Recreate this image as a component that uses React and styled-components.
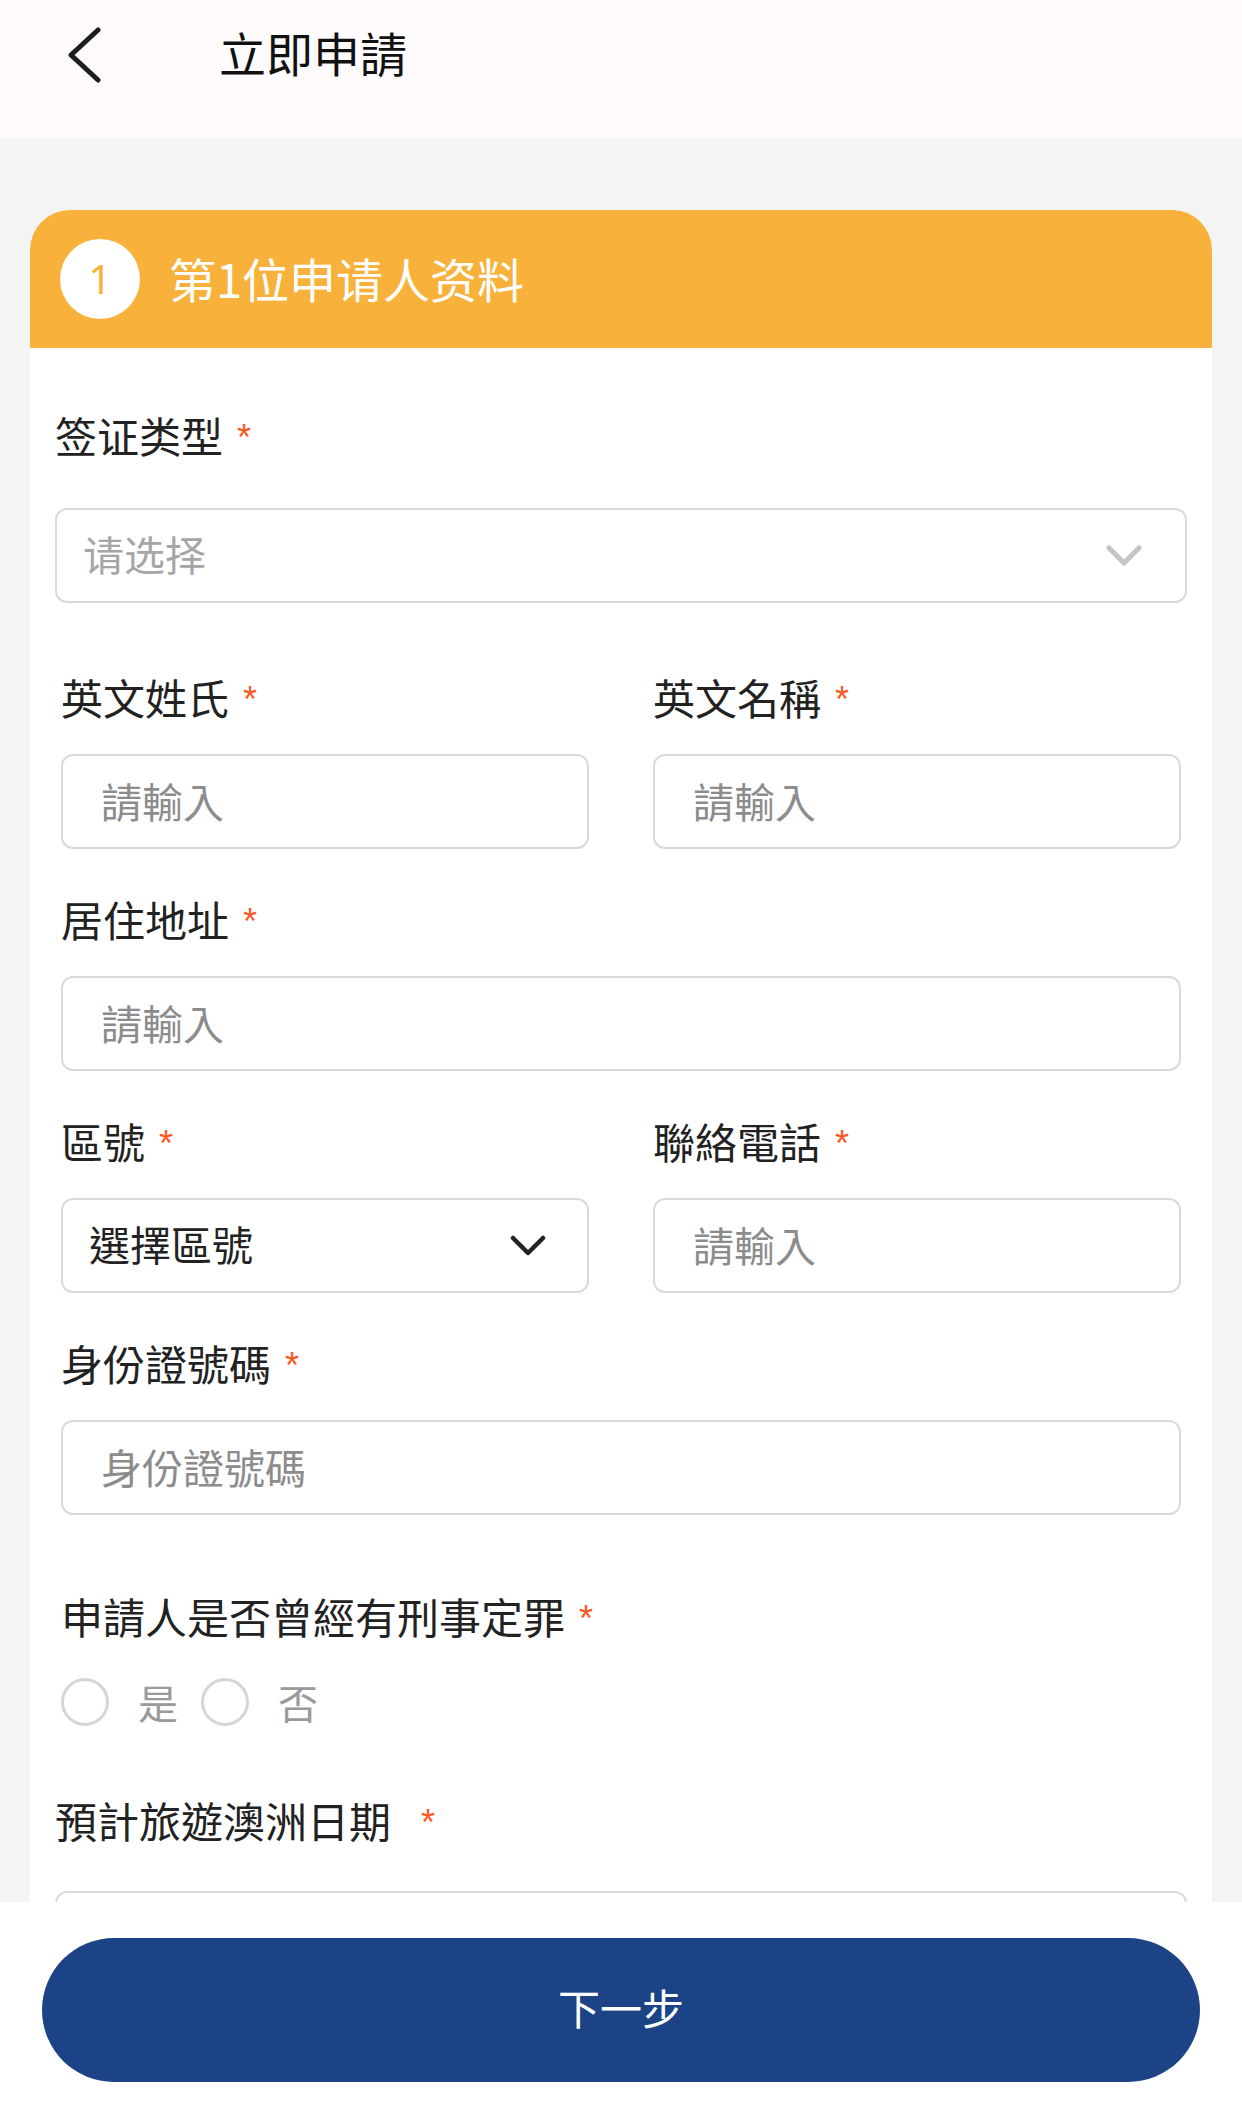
import React from "react";
import styled, { createGlobalStyle } from "styled-components";

const FONT = `"Noto Sans CJK TC", "Noto Sans CJK SC", "Noto Sans", sans-serif`;

const GlobalStyle = createGlobalStyle`
  html, body { margin: 0; padding: 0; }
  body { font-family: ${FONT}; background: #f4f4f4; }
  * { box-sizing: border-box; }
`;

const Page = styled.div`
  display: flex;
  flex-direction: column;
  width: 100%;
  height: 100vh;
  overflow: hidden;
`;

const Header = styled.header`
  flex-shrink: 0;
  height: 138px;
  padding: 0 0 30px 67px;
  display: flex;
  align-items: center;
  background: #fffbfd;
`;

const BackButton = styled.button`
  display: flex;
  padding: 0;
  border: 0;
  background: none;
  width: 34px;
  height: 56px;
  margin-top: 2px;
`;

const Title = styled.h1`
  margin: 0 0 6px 118px;
  font-size: 47px;
  font-weight: 400;
  color: #111;
  line-height: 1;
`;

const Main = styled.main`
  flex: 1;
  min-height: 0;
  overflow: hidden;
  background: #f4f4f4;
  padding: 72px 30px 0;
`;

const Card = styled.section`
  background: #fff;
  border-radius: 40px 40px 0 0;
  overflow: hidden;
`;

const CardHead = styled.div`
  height: 138px;
  background: #f8b23b;
  display: flex;
  align-items: center;
  gap: 29px;
  padding-left: 30px;
`;

const StepBadge = styled.span`
  width: 80px;
  height: 80px;
  border-radius: 50%;
  background: #fff;
  color: #f8b23b;
  font-family: "Noto Sans", "Liberation Sans", sans-serif;
  font-size: 40px;
  display: flex;
  align-items: center;
  justify-content: center;
  line-height: 1;
`;

const CardTitle = styled.h2`
  margin: 0 0 4px;
  font-size: 47px;
  font-weight: 400;
  color: #fff;
  line-height: 1;
`;

const CardBody = styled.div`
  padding: 59px 25px 0;
`;

const Field = styled.div`
  display: flex;
  flex-direction: column;
  gap: ${(p) => p.$gap}px;
  margin-top: ${(p) => p.$top || 0}px;
  grid-column: ${(p) => (p.$span ? "1 / -1" : "auto")};
`;

const Label = styled.label`
  display: flex;
  align-items: center;
  gap: ${(p) => p.$starGap || 14}px;
  height: 60px;
  padding-bottom: 5px;
  font-size: 42px;
  color: #222;
  line-height: 1;
`;

const Star = styled.span`
  color: #ff5722;
  font-family: "Liberation Sans", sans-serif;
  font-size: 36px;
  line-height: 1;
  margin-top: 6px;
`;

const Group = styled.div`
  display: grid;
  grid-template-columns: 1fr 1fr;
  column-gap: 64px;
  row-gap: 42px;
  padding: 0 6px;
  margin-top: 66px;
`;

const TextInput = styled.input`
  display: block;
  width: 100%;
  height: 95px;
  border: 2px solid #dadada;
  border-radius: 12px;
  padding: 0 0 4px 38px;
  font-family: ${FONT};
  font-size: 41px;
  color: #222;
  background: #fff;
  outline: none;
  &::placeholder {
    color: #8c8c8c;
  }
`;

const SelectBox = styled.div`
  display: flex;
  align-items: center;
  justify-content: space-between;
  height: 95px;
  border: 2px solid #dadada;
  border-radius: 12px;
  padding: 0 ${(p) => p.$right}px 0 26px;
  font-size: 41px;
  color: ${(p) => (p.$muted ? "#a6a6a6" : "#222")};
  background: #fff;
`;

const SelectText = styled.span`
  padding-bottom: 4px;
  line-height: 1;
`;

const RadioRow = styled.div`
  display: flex;
  align-items: center;
  height: 48px;
`;

const RadioOption = styled.label`
  display: flex;
  align-items: center;
  gap: 29px;
  margin-right: 23px;
  font-size: 40px;
  color: #9a9a9a;
  line-height: 1;
`;

const RadioCircle = styled.span`
  width: 48px;
  height: 48px;
  border-radius: 50%;
  border: 3px solid #d6d6d6;
  background: #fff;
`;

const Footer = styled.footer`
  flex-shrink: 0;
  height: 216px;
  padding: 36px 42px;
  background: #fff;
`;

const NextButton = styled.button`
  display: flex;
  align-items: center;
  justify-content: center;
  width: 100%;
  height: 144px;
  border: 0;
  border-radius: 72px;
  padding: 0 0 6px;
  background: #1c4385;
  color: #fff;
  font-family: ${FONT};
  font-size: 42px;
  line-height: 1;
`;

const Chevron = ({ color, width }) => (
  <svg width="36" height="22" viewBox="0 0 36 22" fill="none">
    <polyline
      points="3,3 18,18 33,3"
      stroke={color}
      strokeWidth={width}
      strokeLinecap="round"
      strokeLinejoin="round"
    />
  </svg>
);

const BackIcon = () => (
  <svg width="34" height="56" viewBox="0 0 34 56" fill="none">
    <polyline
      points="31,3 4,28 31,53"
      stroke="#1e1e1e"
      strokeWidth="5"
      strokeLinecap="round"
      strokeLinejoin="round"
    />
  </svg>
);

const FieldLabel = ({ children, starGap }) => (
  <Label $starGap={starGap}>
    <span>{children}</span>
    <Star>*</Star>
  </Label>
);

export default function App() {
  return (
    <>
      <GlobalStyle />
      <Page>
        <Header>
          <BackButton aria-label="返回">
            <BackIcon />
          </BackButton>
          <Title>立即申請</Title>
        </Header>
        <Main>
          <Card>
            <CardHead>
              <StepBadge>1</StepBadge>
              <CardTitle>第1位申请人资料</CardTitle>
            </CardHead>
            <CardBody>
              <Field $gap={41}>
                <FieldLabel>签证类型</FieldLabel>
                <SelectBox $muted $right={43}>
                  <SelectText>请选择</SelectText>
                  <Chevron color="#c4c4c4" width={5} />
                </SelectBox>
              </Field>

              <Group>
                <Field $gap={25}>
                  <FieldLabel>英文姓氏</FieldLabel>
                  <TextInput placeholder="請輸入" />
                </Field>
                <Field $gap={25}>
                  <FieldLabel>英文名稱</FieldLabel>
                  <TextInput placeholder="請輸入" />
                </Field>
                <Field $gap={25} $span>
                  <FieldLabel>居住地址</FieldLabel>
                  <TextInput placeholder="請輸入" />
                </Field>
                <Field $gap={25}>
                  <FieldLabel>區號</FieldLabel>
                  <SelectBox $right={41}>
                    <SelectText>選擇區號</SelectText>
                    <Chevron color="#222" width={4.5} />
                  </SelectBox>
                </Field>
                <Field $gap={25}>
                  <FieldLabel>聯絡電話</FieldLabel>
                  <TextInput placeholder="請輸入" />
                </Field>
                <Field $gap={25} $span>
                  <FieldLabel>身份證號碼</FieldLabel>
                  <TextInput placeholder="身份證號碼" />
                </Field>
                <Field $gap={30} $span $top={31}>
                  <FieldLabel>申請人是否曾經有刑事定罪</FieldLabel>
                  <RadioRow>
                    <RadioOption>
                      <RadioCircle />
                      是
                    </RadioOption>
                    <RadioOption>
                      <RadioCircle />
                      否
                    </RadioOption>
                  </RadioRow>
                </Field>
              </Group>

              <Field $gap={39} $top={66}>
                <FieldLabel starGap={30}>預計旅遊澳洲日期</FieldLabel>
                <TextInput placeholder="" />
              </Field>
            </CardBody>
          </Card>
        </Main>
        <Footer>
          <NextButton>下一步</NextButton>
        </Footer>
      </Page>
    </>
  );
}
